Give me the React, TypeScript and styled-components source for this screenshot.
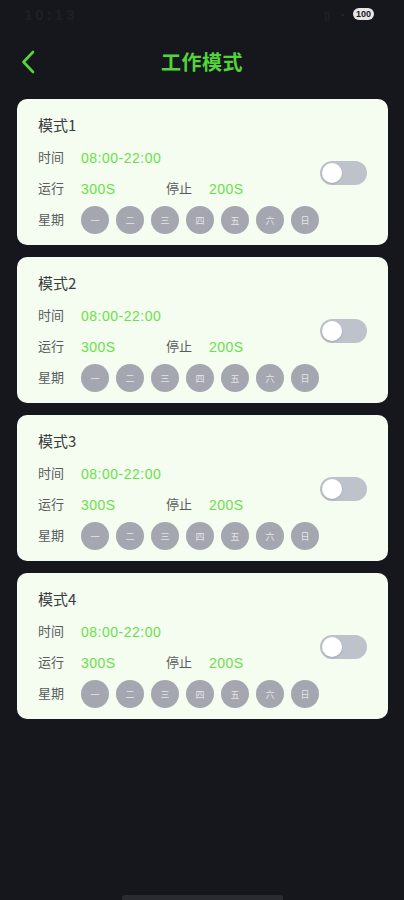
import React, { useState } from 'react'
import styled, { createGlobalStyle } from 'styled-components'

const GlobalStyle = createGlobalStyle`
    html, body {
        margin: 0;
        padding: 0;
        background: #16171c;
    }
    body {
        font-family: "Noto Sans CJK SC", "Liberation Sans", sans-serif;
    }
`

interface IMode {
    id: number
    time: string
    run: string
    stop: string
    enabled: boolean
}

const WEEK_DAYS = ['一', '二', '三', '四', '五', '六', '日']

const initialModes: IMode[] = [1, 2, 3, 4].map(id => ({
    id,
    time: '08:00-22:00',
    run: '300S',
    stop: '200S',
    enabled: false
}))

const App = function (): JSX.Element {
    const [modes, setModes] = useState<IMode[]>(initialModes)

    const toggleMode = (id: number): void => {
        setModes(prev => prev.map(m => (m.id === id ? { ...m, enabled: !m.enabled } : m)))
    }

    return (
        <Screen>
            <GlobalStyle />
            <StatusBar>
                <StatusTime>10:13</StatusTime>
                <StatusIcons>
                    <DimIcon>▯</DimIcon>
                    <DimIcon>◔</DimIcon>
                    <Battery>100</Battery>
                </StatusIcons>
            </StatusBar>
            <Header>
                <BackButton type="button" aria-label="返回">
                    <svg width="14" height="24" viewBox="0 0 14 24" fill="none">
                        <path d="M12 2 L2.5 12 L12 22" stroke="#56d63c" strokeWidth="2.6" strokeLinecap="round" strokeLinejoin="round" />
                    </svg>
                </BackButton>
                <Title>工作模式</Title>
            </Header>
            <ModeList>
                {modes.map(mode => (
                    <ModeCard key={mode.id}>
                        <CardBody>
                            <CardTitle>模式{mode.id}</CardTitle>
                            <InfoRow>
                                <Label>时间</Label>
                                <Value>{mode.time}</Value>
                            </InfoRow>
                            <InfoRow>
                                <Label>运行</Label>
                                <Value $width={85}>{mode.run}</Value>
                                <Label>停止</Label>
                                <Value>{mode.stop}</Value>
                            </InfoRow>
                            <InfoRow>
                                <Label>星期</Label>
                                <DayList>
                                    {WEEK_DAYS.map(day => (
                                        <DayDot key={day}>{day}</DayDot>
                                    ))}
                                </DayList>
                            </InfoRow>
                        </CardBody>
                        <Switch type="button" $on={mode.enabled} onClick={() => toggleMode(mode.id)}>
                            <Knob $on={mode.enabled} />
                        </Switch>
                    </ModeCard>
                ))}
            </ModeList>
            <HomeIndicator />
        </Screen>
    )
}

export default App

const Screen = styled.div`
    min-height: 900px;
    display: flex;
    flex-direction: column;
    background: #16171c;
`

const StatusBar = styled.div`
    height: 30px;
    display: flex;
    align-items: center;
    justify-content: space-between;
    padding: 0 30px 2px 24px;
    box-sizing: border-box;
`

const StatusTime = styled.span`
    font-family: "Liberation Sans", sans-serif;
    font-size: 15px;
    font-weight: 700;
    color: #1f2026;
    letter-spacing: 3px;
`

const StatusIcons = styled.div`
    display: flex;
    align-items: center;
    gap: 8px;
`

const DimIcon = styled.span`
    font-size: 11px;
    color: #26272d;
`

const Battery = styled.span`
    font-family: "Liberation Sans", sans-serif;
    font-size: 9px;
    font-weight: 700;
    color: #1a1b20;
    background: #e6e6e8;
    border-radius: 6px;
    padding: 1px 3px;
    line-height: 10px;
`

const Header = styled.div`
    height: 62px;
    display: flex;
    align-items: center;
    justify-content: center;
    position: relative;
`

const BackButton = styled.button`
    position: absolute;
    left: 21px;
    top: 20px;
    background: none;
    border: none;
    padding: 0;
    display: flex;
    cursor: pointer;
`

const Title = styled.h1`
    margin: 0;
    font-size: 20px;
    font-weight: 700;
    color: #52d43a;
    letter-spacing: 0.5px;
`

const ModeList = styled.div`
    display: flex;
    flex-direction: column;
    gap: 12px;
    padding: 7px 16px 0 17px;
`

const ModeCard = styled.div`
    height: 146px;
    box-sizing: border-box;
    display: flex;
    align-items: center;
    justify-content: space-between;
    padding: 0 21px;
    background: #f4fdef;
    border-radius: 10px;
`

const CardBody = styled.div`
    display: flex;
    flex-direction: column;
    gap: 3px;
    padding-top: 6px;
`

const CardTitle = styled.div`
    font-size: 15px;
    line-height: 18px;
    color: #3a3b3f;
    margin-bottom: 7px;
`

const InfoRow = styled.div`
    height: 28px;
    display: flex;
    align-items: center;
`

const Label = styled.span`
    width: 43px;
    font-size: 13px;
    line-height: 13px;
    margin-top: -3px;
    color: #5a5b60;
`

const Value = styled.span<{ $width?: number }>`
    width: ${p => (p.$width ? `${p.$width}px` : 'auto')};
    font-family: "Liberation Sans", sans-serif;
    font-size: 14px;
    letter-spacing: 0.5px;
    color: #6ae04c;
`

const DayList = styled.div`
    display: flex;
    gap: 7px;
`

const DayDot = styled.span`
    width: 28px;
    height: 28px;
    border-radius: 50%;
    background: #a4a6b0;
    color: #e4e5ea;
    font-size: 9px;
    display: flex;
    align-items: center;
    justify-content: center;
`

const Switch = styled.button<{ $on: boolean }>`
    width: 47px;
    height: 24px;
    border: none;
    border-radius: 12px;
    padding: 2px;
    margin-top: 2px;
    background: ${p => (p.$on ? '#52d43a' : '#bec2ca')};
    display: flex;
    justify-content: ${p => (p.$on ? 'flex-end' : 'flex-start')};
    cursor: pointer;
`

const Knob = styled.span<{ $on: boolean }>`
    width: 20px;
    height: 20px;
    border-radius: 50%;
    background: #ffffff;
    box-shadow: 0 1px 2px rgba(0, 0, 0, 0.15);
`

const HomeIndicator = styled.div`
    margin: auto auto 0;
    width: 161px;
    height: 5px;
    border-radius: 3px 3px 0 0;
    background: #2a2b31;
`
